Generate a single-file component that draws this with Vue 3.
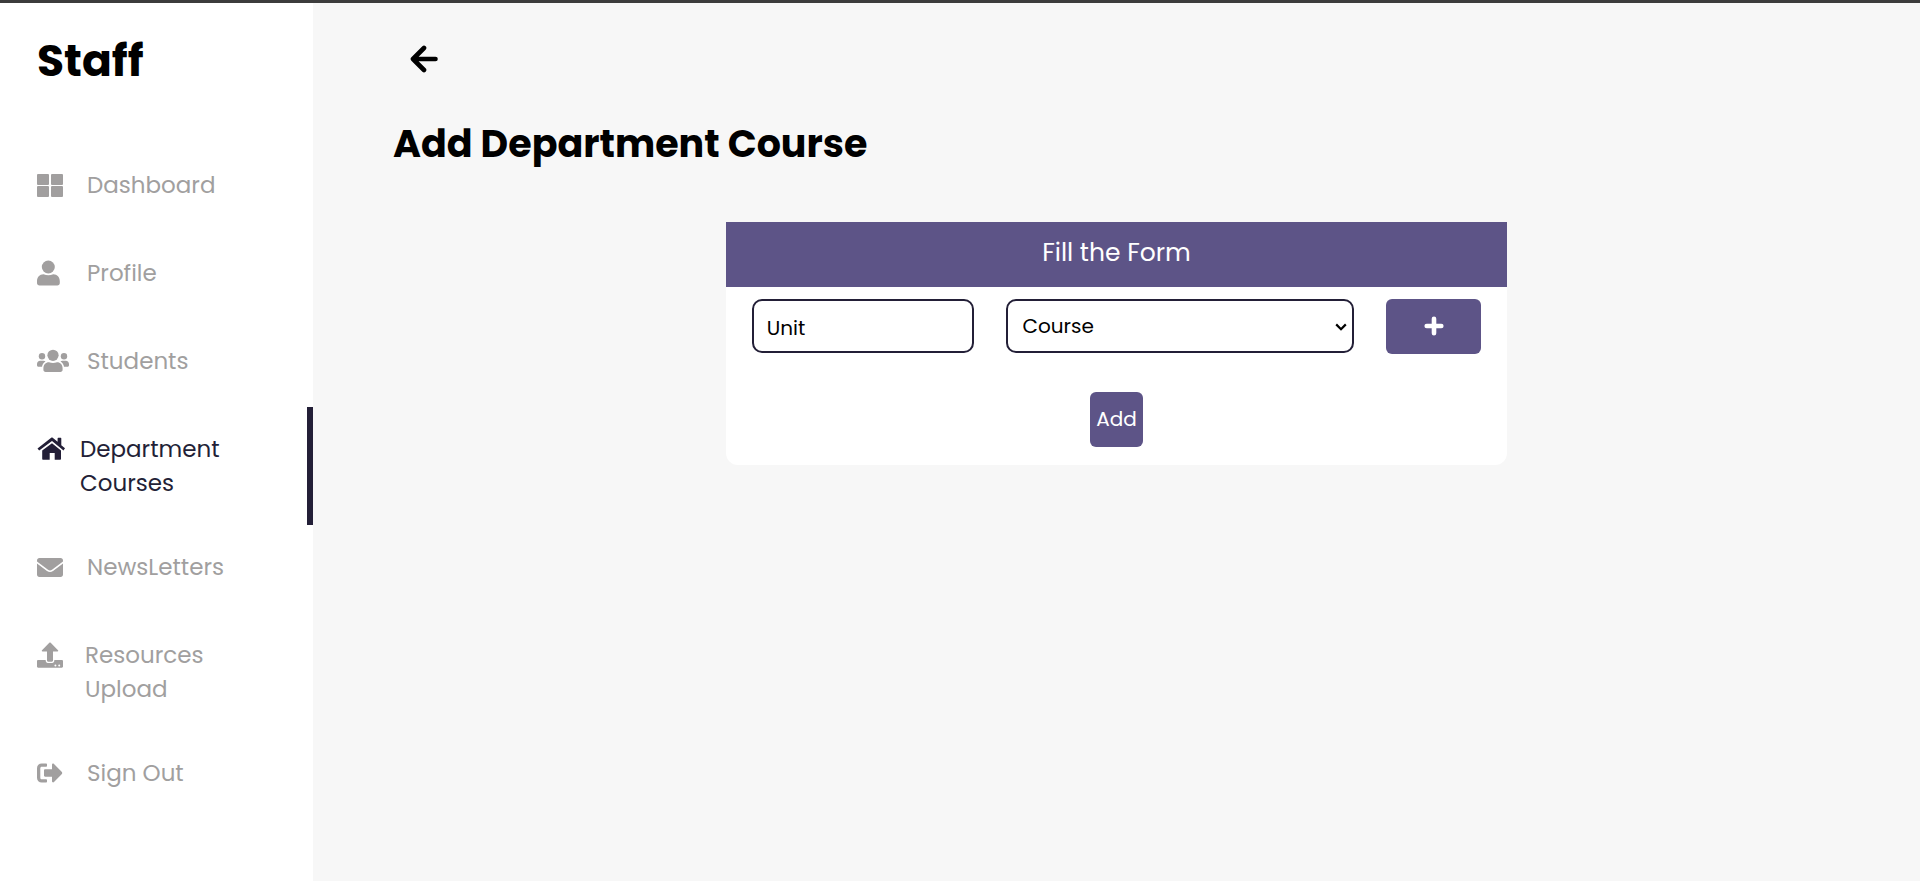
<template>
  <div class="page">
    <aside class="sidebar">
      <h1 class="brand">Staff</h1>
      <nav>
        <ul class="menu">
          <li v-for="item in menu" :key="item.label">
            <a href="#" class="menu-item" :class="[item.icon, { active: item.active }]">
              <span class="menu-icon">
                <svg v-if="item.icon === 'dashboard'" width="26" height="26" viewBox="0 0 26 26">
                  <rect x="0" y="2" width="12" height="11" rx="1" />
                  <rect x="14" y="2" width="12" height="11" rx="1" />
                  <rect x="0" y="14" width="12" height="11" rx="1" />
                  <rect x="14" y="14" width="12" height="11" rx="1" />
                </svg>
                <svg v-else-if="item.icon === 'profile'" width="23" height="26" viewBox="0 0 23 26">
                  <circle cx="11.3" cy="7" r="6.5" />
                  <path d="M6.5 14.2c3.2 1.4 6.6 1.4 9.8 0 4 0 6.5 3 6.5 7v1.8c0 1.5-1 2.5-2.5 2.5H2.5C1 25.5 0 24.5 0 23v-1.8c0-4 2.5-7 6.5-7z" />
                </svg>
                <svg v-else-if="item.icon === 'students'" width="32" height="26" viewBox="0 0 32 26">
                  <circle cx="16" cy="7.3" r="5.6" />
                  <circle cx="5" cy="8.2" r="3.2" />
                  <circle cx="27" cy="8.2" r="3.2" />
                  <path d="M12 14.2c2.6 1.1 5.4 1.1 8 0 3.4 0 5.6 2.6 5.6 6v1.6c0 1.3-.9 2.2-2.2 2.2H8.6c-1.3 0-2.2-.9-2.2-2.2v-1.6c0-3.4 2.2-6 5.6-6z" />
                  <path d="M3.2 12.8h3.3c.9 0 1.5.2 2 .6-2 1.1-3.2 3-3.5 5.4H1.5c-.9 0-1.5-.6-1.5-1.5V16c0-1.9 1.3-3.2 3.2-3.2zM28.8 12.8h-3.3c-.9 0-1.5.2-2 .6 2 1.1 3.2 3 3.5 5.4h3.5c.9 0 1.5-.6 1.5-1.5V16c0-1.9-1.3-3.2-3.2-3.2z" />
                </svg>
                <svg v-else-if="item.icon === 'courses'" width="28" height="26" viewBox="0 0 28 26">
                  <path d="M14.2 1.700c.5-.4 1-.4 1.500 0l4.900 4V2.400c0-.4.2-.6.6-.6h2.500c.4 0 .6.200.6.6v6.800l3.700 3.100-1.500 2.100L15 4.900 2.200 14.400.5 12.400z" />
                  <path d="M15 7.200l9 7.300v8.200c0 .6-.4 1-1 1h-5.300v-6.600h-5v6.600H6.200c-.6 0-1-.4-1-1v-8.200z" />
                </svg>
                <svg v-else-if="item.icon === 'newsletters'" width="26" height="26" viewBox="0 0 26 26">
                  <path d="M2.400 4h21.200C25 4 26 5 26 6.400v1.200l-11 8.200c-1.400.9-2.600.9-4 0L0 7.600V6.400C0 5 1 4 2.400 4z" />
                  <path d="M0 9.400l10 7.500c2 1.400 4 1.400 6 0l10-7.500v11.200c0 1.400-1 2.400-2.400 2.400H2.400C1 23 0 22 0 20.600z" />
                </svg>
                <svg v-else-if="item.icon === 'resources'" width="26" height="26" viewBox="0 0 26 26">
                  <path d="M12.300.8c.5-.5.9-.5 1.400 0l7.300 7.500c.5.600.3 1.200-.5 1.200H16v9c0 .7-.5 1.200-1.200 1.200h-3.600c-.7 0-1.200-.5-1.200-1.200v-9H5.500c-.8 0-1-.6-.5-1.200z" />
                  <path fill-rule="evenodd" d="M1.200 18h7.500v.8c0 1.200.9 2.100 2.100 2.100h4.400c1.200 0 2.100-.9 2.100-2.100V18h7.500c.7 0 1.200.5 1.200 1.200v5.400c0 .7-.5 1.200-1.200 1.200H1.200C.5 25.800 0 25.300 0 24.600v-5.400C0 18.500.5 18 1.200 18zM18.400 22.400a1 1 0 1 0 0 2 1 1 0 0 0 0-2zM22.200 22.400a1 1 0 1 0 0 2 1 1 0 0 0 0-2z" />
                </svg>
                <svg v-else width="26" height="26" viewBox="0 0 26 26">
                  <path d="M4.800 3.500h4.400c.5 0 .8.300.8.800v1.600c0 .5-.3.800-.8.800H4.900c-1 0-1.600.6-1.600 1.600v9.400c0 1 .6 1.600 1.600 1.600h4.300c.5 0 .8.300.8.800v1.600c0 .5-.3.800-.8.800H4.800C2 22.500 0 20.500 0 17.700V8.300C0 5.500 2 3.500 4.800 3.500z" />
                  <path d="M15 4.700c0-1.100 1.200-1.500 2-.8l7.900 8.200c.5.600.5 1.200 0 1.800L17 22.100c-.8.7-2 .3-2-.8v-4.600H8.200c-.7 0-1.200-.5-1.200-1.200v-5c0-.7.5-1.200 1.200-1.200H15z" />
                </svg>
              </span>
              <span class="menu-label">{{ item.label }}</span>
            </a>
          </li>
        </ul>
      </nav>
    </aside>

    <main class="content">
      <a href="#" class="back" aria-label="Back">
        <svg width="28" height="28" viewBox="0 0 28 28">
          <path d="M14 3L3 14l11 11M3.5 14H25.5" fill="none" stroke="#000" stroke-width="4.6" stroke-linecap="round" stroke-linejoin="round" />
        </svg>
      </a>
      <h2 class="title">Add Department Course</h2>

      <form class="card" @submit.prevent>
        <div class="card-header">Fill the Form</div>
        <div class="fields">
          <input v-model="unit" type="text" class="field" placeholder="Unit" aria-label="Unit" />
          <div class="select-wrap">
            <select v-model="course" class="field select" aria-label="Course">
              <option value="">Course</option>
            </select>
            <svg class="chevron" width="12" height="8" viewBox="0 0 12 8">
              <path d="M1.2 1.4L6 6.2l4.8-4.8" fill="none" stroke="#000" stroke-width="2.2" />
            </svg>
          </div>
          <button type="button" class="btn" aria-label="Add row">
            <svg width="20" height="20" viewBox="0 0 20 20">
              <path d="M10 2.7v14.6M2.7 10h14.6" stroke="#fff" stroke-width="4.6" stroke-linecap="round" />
            </svg>
          </button>
        </div>
        <div class="submit-row">
          <button type="submit" class="btn">Add</button>
        </div>
      </form>
    </main>
  </div>
</template>

<script setup>
import { ref } from 'vue'

const unit = ref('')
const course = ref('')

const menu = ref([
  { label: 'Dashboard', icon: 'dashboard' },
  { label: 'Profile', icon: 'profile' },
  { label: 'Students', icon: 'students' },
  { label: 'Department Courses', icon: 'courses', active: true },
  { label: 'NewsLetters', icon: 'newsletters' },
  { label: 'Resources Upload', icon: 'resources' },
  { label: 'Sign Out', icon: 'signout' },
])
</script>

<style>
body { margin: 0; background: #f7f7f7; }
</style>

<style scoped>
.page { box-sizing: border-box; display: flex; min-height: 100vh; border-top: 3px solid #3c3c3c; background: #f7f7f7; font-family: Poppins, Inter, sans-serif; color: #000; }

.sidebar { box-sizing: border-box; flex: none; width: 16.3%; background: #fff; }
.brand { margin: 0; padding: 25px 0 49px 37px; font-size: 44px; line-height: 66px; font-weight: 700; }
.menu { list-style: none; margin: 0; padding: 0; }
.menu-item { box-sizing: border-box; display: flex; align-items: flex-start; min-height: 88px; padding: 25px 60px 25px 37px; border-right: 6px solid transparent; color: #a19f9f; font-size: 23px; line-height: 34px; text-decoration: none; }
.menu-item.active { border-right-color: #231f37; color: #231f37; }
.menu-icon { display: flex; align-items: center; flex: none; width: 50px; height: 34px; }
.menu-icon svg { fill: currentColor; }
.courses .menu-icon { width: 43px; }
.resources .menu-icon { width: 48px; }

.content { box-sizing: border-box; flex: 1; padding: 42px 80px; }
.back { display: flex; width: 28px; margin-left: 17px; }
.title { margin: 43px 0 51px; font-size: 38px; line-height: 55px; font-weight: 700; }

.card { width: 54%; margin: 0 auto; background: #fff; border-radius: 0 0 12px 12px; }
.card-header { height: 65px; background: #5d5487; color: #fff; font-size: 25px; line-height: 62px; text-align: center; }
.fields { display: grid; grid-template-columns: 7fr 11fr 3fr; gap: 32px; padding: 12px 26px 0; }
.field { box-sizing: border-box; width: 100%; min-width: 0; height: 54px; padding: 3px 13px 0; border: 2px solid #231f37; border-radius: 10px; background: #fff; color: #000; font-family: inherit; font-size: 20px; }
.field::placeholder { color: #000; opacity: 1; }
.select-wrap { position: relative; }
.select { appearance: none; padding: 0 30px 0 15px; }
.chevron { position: absolute; top: 24px; right: 7px; pointer-events: none; }
.btn { display: flex; align-items: center; justify-content: center; height: 55px; padding: 0 6px 1px; border: 0; border-radius: 6px; background: #5d5487; color: #fff; font-family: inherit; font-size: 20px; cursor: pointer; }
.submit-row { display: flex; justify-content: center; padding: 38px 0 18px; }
</style>
